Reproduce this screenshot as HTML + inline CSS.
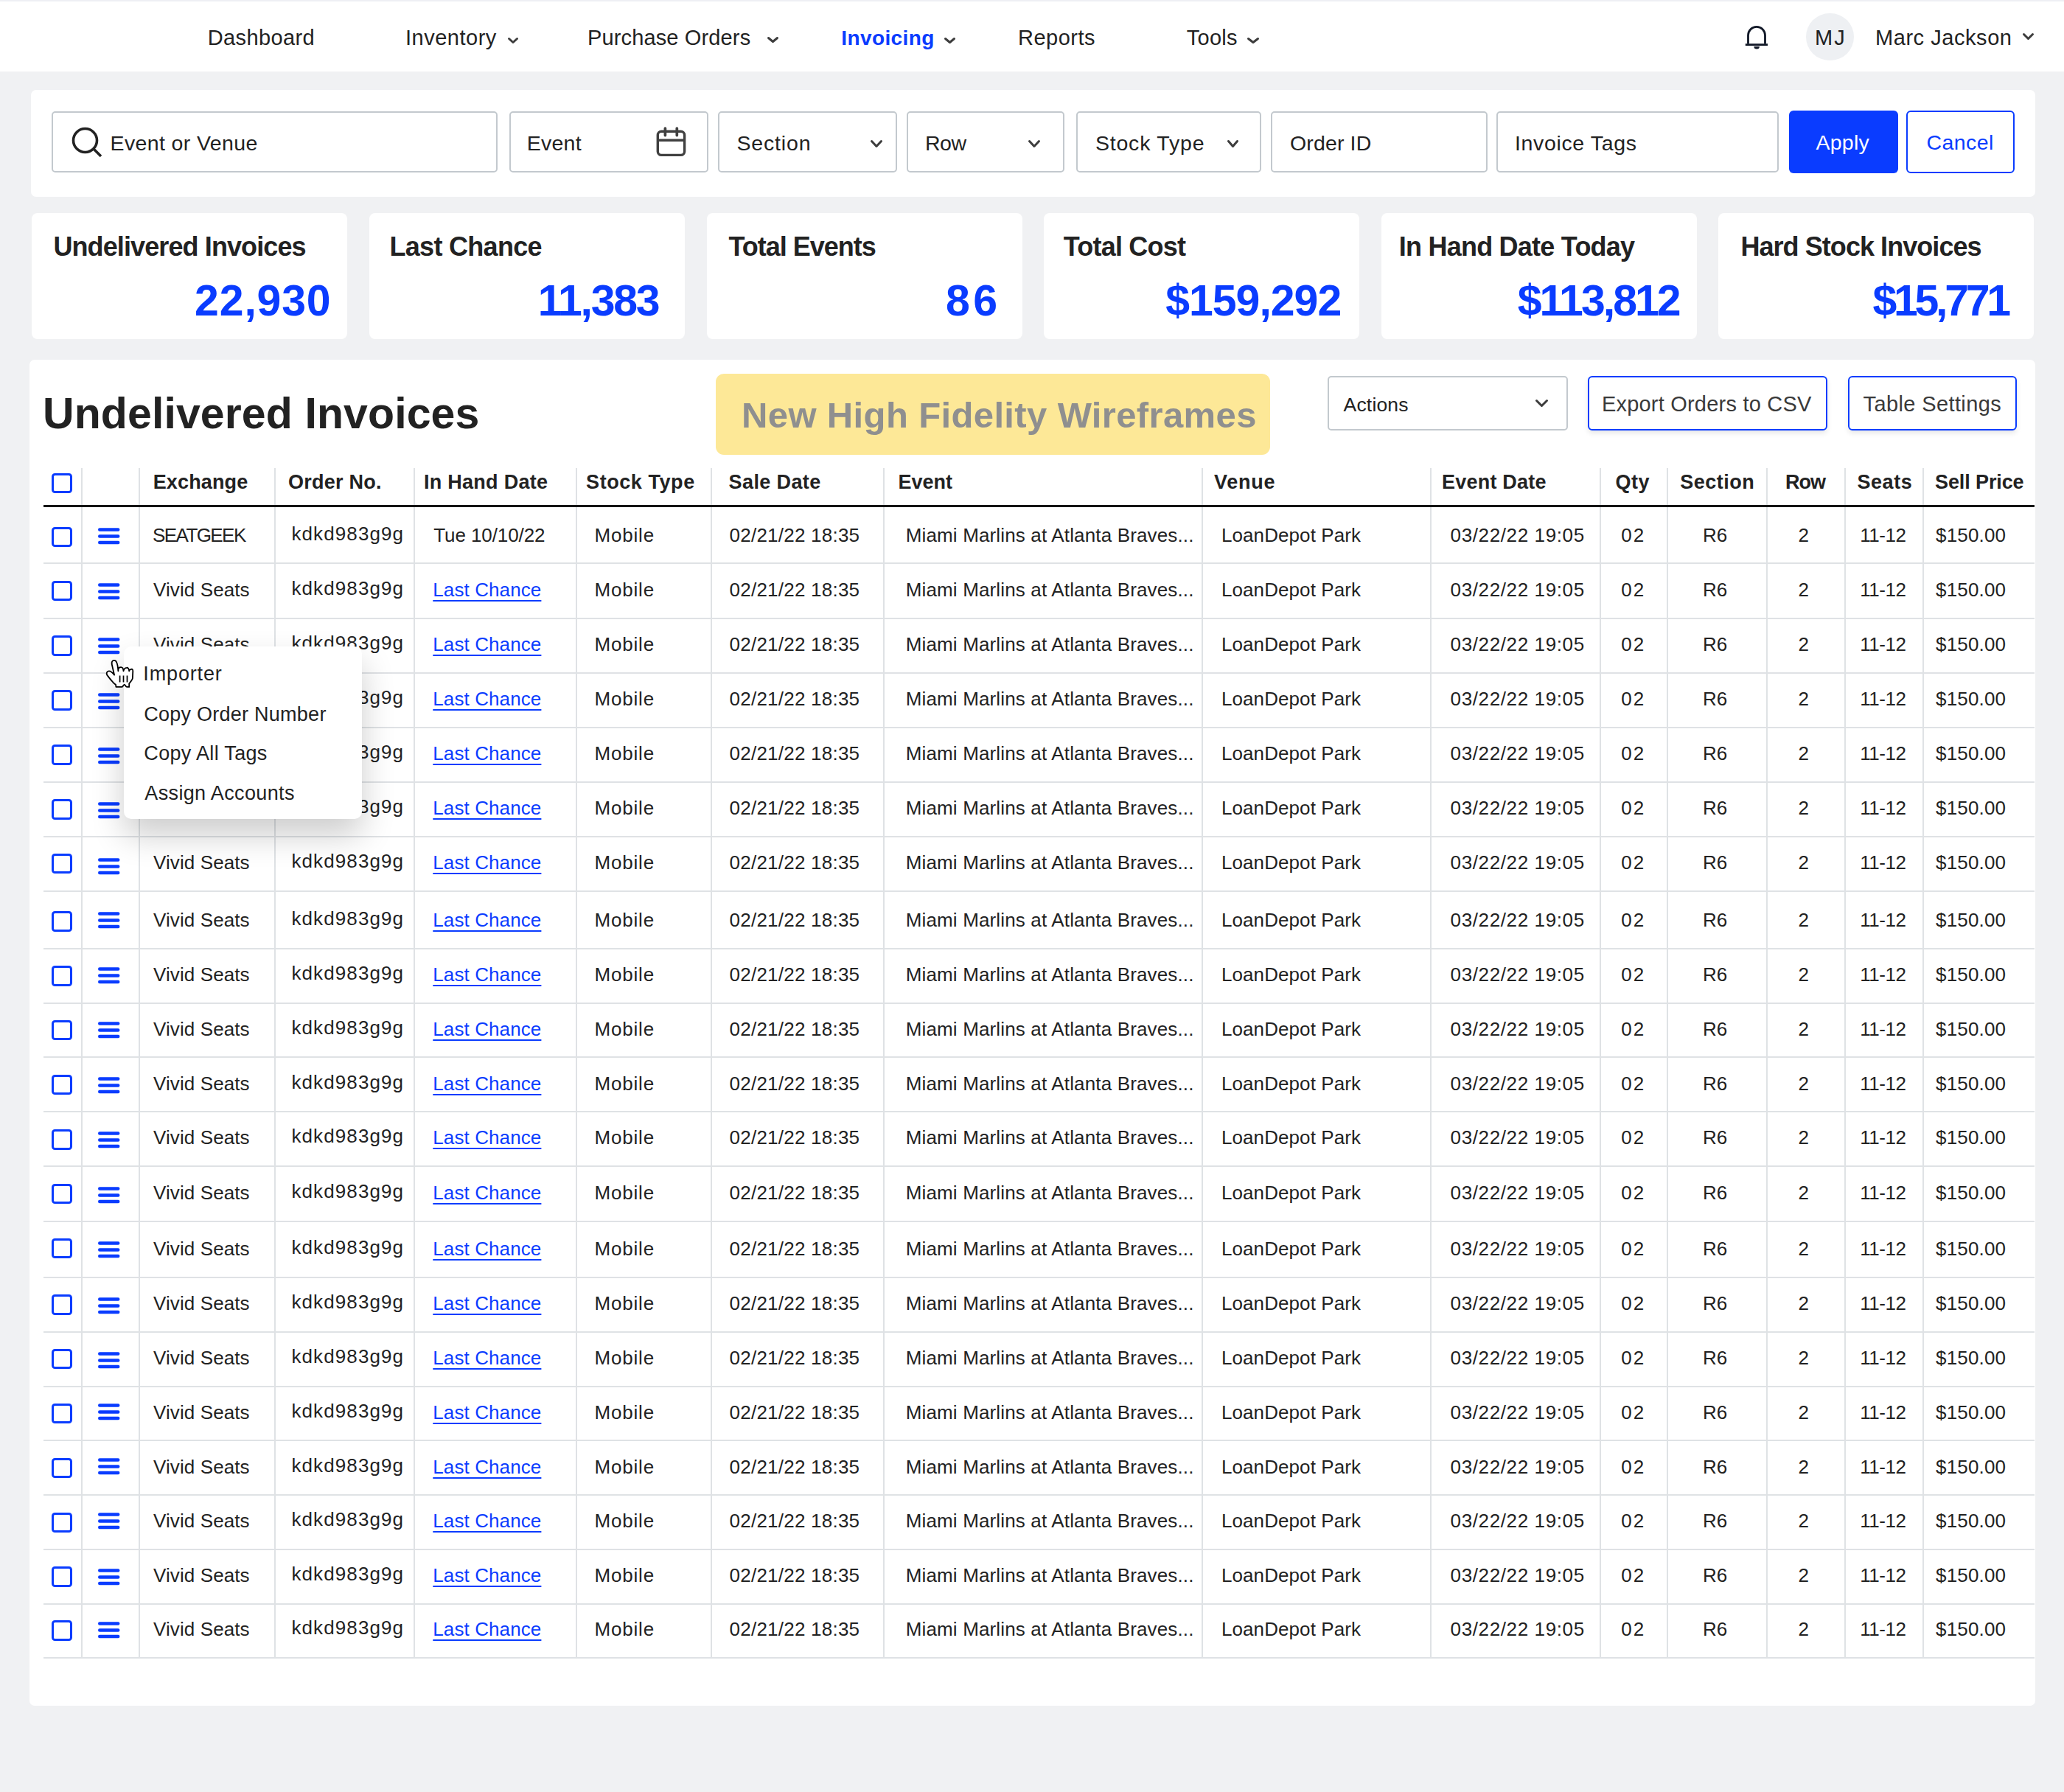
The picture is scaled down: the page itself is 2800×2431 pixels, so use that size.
<!DOCTYPE html>
<html><head><meta charset="utf-8"><style>
html,body{margin:0;padding:0}
body{width:2800px;height:2431px;position:relative;overflow:hidden;background:#f0f1f3;font-family:"Liberation Sans",sans-serif}
.t,.tv{position:absolute;line-height:1;white-space:nowrap}
.r{position:absolute;box-sizing:border-box}
svg.r{overflow:visible}
</style></head><body>
<div class="r" style="left:0.0px;top:0.0px;width:2800.0px;height:2.0px;background:#eeeff4"></div>
<div class="r" style="left:0.0px;top:2.0px;width:2800.0px;height:95.0px;background:#fff"></div>
<div class="t " style="left:281.7px;top:36.7px;font-size:29px;font-weight:400;color:#222;letter-spacing:0.38px;">Dashboard</div>
<div class="t " style="left:550.0px;top:36.7px;font-size:29px;font-weight:400;color:#222;letter-spacing:0.50px;">Inventory</div>
<svg class="r" style="left:686.0px;top:48.0px" width="20.0" height="14.0" viewBox="-3 -3 20.0 14.0"><path d="M1.5 1.5 L7.0 6.5 L12.5 1.5" fill="none" stroke="#3d3d3d" stroke-width="3" stroke-linecap="round" stroke-linejoin="round"/></svg>
<div class="t " style="left:797.0px;top:36.7px;font-size:29px;font-weight:400;color:#222;letter-spacing:0.14px;">Purchase Orders</div>
<svg class="r" style="left:1038.0px;top:47.0px" width="21.0" height="14.0" viewBox="-3 -3 21.0 14.0"><path d="M1.5 1.5 L7.5 6.5 L13.5 1.5" fill="none" stroke="#3d3d3d" stroke-width="3" stroke-linecap="round" stroke-linejoin="round"/></svg>
<div class="t " style="left:1141.3px;top:37.6px;font-size:28px;font-weight:700;color:#0a3cff;letter-spacing:0.38px;">Invoicing</div>
<svg class="r" style="left:1278.0px;top:48.0px" width="21.0" height="14.0" viewBox="-3 -3 21.0 14.0"><path d="M1.5 1.5 L7.5 6.5 L13.5 1.5" fill="none" stroke="#3d3d3d" stroke-width="3" stroke-linecap="round" stroke-linejoin="round"/></svg>
<div class="t " style="left:1381.0px;top:36.7px;font-size:29px;font-weight:400;color:#222;letter-spacing:0.50px;">Reports</div>
<div class="t " style="left:1609.8px;top:36.7px;font-size:29px;font-weight:400;color:#222;letter-spacing:0.25px;">Tools</div>
<svg class="r" style="left:1689.0px;top:48.0px" width="22.0" height="14.0" viewBox="-3 -3 22.0 14.0"><path d="M1.5 1.5 L8.0 6.5 L14.5 1.5" fill="none" stroke="#3d3d3d" stroke-width="3" stroke-linecap="round" stroke-linejoin="round"/></svg>
<svg class="r" style="left:2366px;top:33px" width="34" height="36" viewBox="0 0 34 36"><path d="M5.5 26.5 V14.8 A11.5 11.5 0 0 1 28.5 14.8 V26.5" fill="none" stroke="#111827" stroke-width="2.8"/><path d="M1.8 27.6 H32" stroke="#111827" stroke-width="2.8"/><path d="M13.4 30 A3.75 3.6 0 0 0 20.9 30 Z" fill="#111827"/></svg>
<div class="r" style="left:2450.0px;top:17.5px;width:64.5px;height:64.5px;background:#eef0f3;border-radius:50%"></div>
<div class="t " style="left:2462.0px;top:36.7px;font-size:29px;font-weight:400;color:#222;letter-spacing:2.00px;">MJ</div>
<div class="t " style="left:2544.0px;top:36.7px;font-size:29px;font-weight:400;color:#222;letter-spacing:0.55px;">Marc Jackson</div>
<svg class="r" style="left:2741.0px;top:42.0px" width="21.0" height="15.0" viewBox="-3 -3 21.0 15.0"><path d="M1.5 1.5 L7.5 7.5 L13.5 1.5" fill="none" stroke="#3d3d3d" stroke-width="3" stroke-linecap="round" stroke-linejoin="round"/></svg>
<div class="r" style="left:42.0px;top:122.0px;width:2719.0px;height:145.0px;background:#fff;border-radius:7px"></div>
<div class="r" style="left:70.0px;top:151.0px;width:605.0px;height:83.0px;border:2px solid #c3c9ce;border-radius:5px;background:#fff"></div>
<svg class="r" style="left:95.7px;top:170.8px" width="46" height="46" viewBox="0 0 46 46"><circle cx="19.5" cy="19.5" r="16" fill="none" stroke="#222" stroke-width="3.6"/><path d="M31 31 L41 41" stroke="#222" stroke-width="3.6" stroke-linecap="butt"/></svg>
<div class="t " style="left:149.5px;top:180.1px;font-size:28.5px;font-weight:400;color:#222;letter-spacing:0.38px;">Event or Venue</div>
<div class="r" style="left:691.0px;top:151.0px;width:270.0px;height:83.0px;border:2px solid #c3c9ce;border-radius:5px;background:#fff"></div>
<div class="t " style="left:714.7px;top:180.1px;font-size:28.5px;font-weight:400;color:#222;letter-spacing:0.25px;">Event</div>
<svg class="r" style="left:889px;top:172px" width="44" height="42" viewBox="0 0 44 42"><rect x="3.3" y="6.2" width="36.3" height="32.2" rx="5" fill="none" stroke="#404040" stroke-width="3.4"/><path d="M3.3 18.3 H39.6" stroke="#404040" stroke-width="3.4"/><path d="M13.4 2 V11.6 M29.3 2 V11.6" stroke="#404040" stroke-width="3.7" stroke-linecap="round"/></svg>
<div class="r" style="left:974.0px;top:151.0px;width:243.0px;height:83.0px;border:2px solid #c3c9ce;border-radius:5px;background:#fff"></div>
<div class="t " style="left:999.5px;top:180.1px;font-size:28.5px;font-weight:400;color:#222;letter-spacing:0.83px;">Section</div>
<svg class="r" style="left:1178.0px;top:187.0px" width="22.0" height="16.0" viewBox="-3 -3 22.0 16.0"><path d="M1.5 1.5 L8.0 8.5 L14.5 1.5" fill="none" stroke="#3d3d3d" stroke-width="3" stroke-linecap="round" stroke-linejoin="round"/></svg>
<div class="r" style="left:1230.0px;top:151.0px;width:214.0px;height:83.0px;border:2px solid #c3c9ce;border-radius:5px;background:#fff"></div>
<div class="t " style="left:1255.0px;top:180.1px;font-size:28.5px;font-weight:400;color:#222;letter-spacing:-0.50px;">Row</div>
<svg class="r" style="left:1392.0px;top:187.0px" width="22.0" height="16.0" viewBox="-3 -3 22.0 16.0"><path d="M1.5 1.5 L8.0 8.5 L14.5 1.5" fill="none" stroke="#3d3d3d" stroke-width="3" stroke-linecap="round" stroke-linejoin="round"/></svg>
<div class="r" style="left:1460.0px;top:151.0px;width:251.0px;height:83.0px;border:2px solid #c3c9ce;border-radius:5px;background:#fff"></div>
<div class="t " style="left:1486.0px;top:180.1px;font-size:28.5px;font-weight:400;color:#222;letter-spacing:0.78px;">Stock Type</div>
<svg class="r" style="left:1662.0px;top:187.0px" width="21.0" height="16.0" viewBox="-3 -3 21.0 16.0"><path d="M1.5 1.5 L7.5 8.5 L13.5 1.5" fill="none" stroke="#3d3d3d" stroke-width="3" stroke-linecap="round" stroke-linejoin="round"/></svg>
<div class="r" style="left:1724.0px;top:151.0px;width:294.0px;height:83.0px;border:2px solid #c3c9ce;border-radius:5px;background:#fff"></div>
<div class="t " style="left:1750.0px;top:180.1px;font-size:28.5px;font-weight:400;color:#222;letter-spacing:0.14px;">Order ID</div>
<div class="r" style="left:2030.0px;top:151.0px;width:383.0px;height:83.0px;border:2px solid #c3c9ce;border-radius:5px;background:#fff"></div>
<div class="t " style="left:2055.0px;top:180.1px;font-size:28.5px;font-weight:400;color:#222;letter-spacing:0.64px;">Invoice Tags</div>
<div class="r" style="left:2427.0px;top:150.0px;width:147.5px;height:85.0px;background:#0a3cff;border-radius:6px"></div>
<div class="t " style="left:2463.5px;top:179.4px;font-size:28.5px;font-weight:400;color:#fff;letter-spacing:0.25px;">Apply</div>
<div class="r" style="left:2585.5px;top:150.0px;width:147.5px;height:85.0px;border:2.5px solid #0a3cff;border-radius:6px;background:#fff"></div>
<div class="t " style="left:2613.5px;top:179.4px;font-size:28.5px;font-weight:400;color:#0a3cff;letter-spacing:0.40px;">Cancel</div>
<div class="r" style="left:43.0px;top:289.0px;width:428.0px;height:170.5px;background:#fff;border-radius:8px"></div>
<div class="t " style="left:72.4px;top:317.1px;font-size:36px;font-weight:700;color:#222;letter-spacing:-0.89px;">Undelivered Invoices</div>
<div class="tv" style="right:2350.5px;top:378.7px;font-size:59px;font-weight:700;color:#0a3cff;letter-spacing:0.82px">22,930</div>
<div class="r" style="left:501.0px;top:289.0px;width:428.0px;height:170.5px;background:#fff;border-radius:8px"></div>
<div class="t " style="left:528.5px;top:317.1px;font-size:36px;font-weight:700;color:#222;letter-spacing:-0.70px;">Last Chance</div>
<div class="tv" style="right:1906.8px;top:378.7px;font-size:59px;font-weight:700;color:#0a3cff;letter-spacing:-2.30px">11,383</div>
<div class="r" style="left:959.0px;top:289.0px;width:428.0px;height:170.5px;background:#fff;border-radius:8px"></div>
<div class="t " style="left:988.4px;top:317.1px;font-size:36px;font-weight:700;color:#222;letter-spacing:-1.00px;">Total Events</div>
<div class="tv" style="right:1442.7px;top:378.7px;font-size:59px;font-weight:700;color:#0a3cff;letter-spacing:4.30px">86</div>
<div class="r" style="left:1416.0px;top:289.0px;width:428.0px;height:170.5px;background:#fff;border-radius:8px"></div>
<div class="t " style="left:1442.7px;top:317.1px;font-size:36px;font-weight:700;color:#222;letter-spacing:-0.78px;">Total Cost</div>
<div class="tv" style="right:980.8px;top:378.7px;font-size:59px;font-weight:700;color:#0a3cff;letter-spacing:-1.01px">$159,292</div>
<div class="r" style="left:1874.0px;top:289.0px;width:428.0px;height:170.5px;background:#fff;border-radius:8px"></div>
<div class="t " style="left:1897.7px;top:317.1px;font-size:36px;font-weight:700;color:#222;letter-spacing:-0.76px;">In Hand Date Today</div>
<div class="tv" style="right:522.4px;top:378.7px;font-size:59px;font-weight:700;color:#0a3cff;letter-spacing:-2.99px">$113,812</div>
<div class="r" style="left:2331.0px;top:289.0px;width:428.0px;height:170.5px;background:#fff;border-radius:8px"></div>
<div class="t " style="left:2361.4px;top:317.1px;font-size:36px;font-weight:700;color:#222;letter-spacing:-0.94px;">Hard Stock Invoices</div>
<div class="tv" style="right:76.1px;top:378.7px;font-size:59px;font-weight:700;color:#0a3cff;letter-spacing:-4.25px">$15,771</div>
<div class="r" style="left:40.1px;top:487.5px;width:2720.6px;height:1826.0px;background:#fff;border-radius:7px"></div>
<div class="t " style="left:58.0px;top:532.3px;font-size:59px;font-weight:700;color:#222;letter-spacing:0.11px;">Undelivered Invoices</div>
<div class="r" style="left:970.5px;top:507.0px;width:752.8px;height:110.0px;background:#fde897;border-radius:11px"></div>
<div class="t " style="left:1006.0px;top:538.5px;font-size:49px;font-weight:700;color:#8f8f8f;letter-spacing:0.37px;">New High Fidelity Wireframes</div>
<div class="r" style="left:1801.0px;top:510.0px;width:325.7px;height:73.7px;border:2px solid #c3c9ce;border-radius:5px;background:#fff"></div>
<div class="t " style="left:1822.6px;top:535.6px;font-size:26.5px;font-weight:400;color:#222;letter-spacing:0.17px;">Actions</div>
<svg class="r" style="left:2080.0px;top:539.0px" width="23.0" height="16.0" viewBox="-3 -3 23.0 16.0"><path d="M1.5 1.5 L8.5 8.5 L15.5 1.5" fill="none" stroke="#3d3d3d" stroke-width="3" stroke-linecap="round" stroke-linejoin="round"/></svg>
<div class="r" style="left:2154.0px;top:510.0px;width:325.0px;height:73.8px;border:2.4px solid #0a3cff;border-radius:6px;background:#fff;box-shadow:0 4px 7px rgba(0,0,0,0.09)"></div>
<div class="t " style="left:2172.9px;top:534.4px;font-size:29px;font-weight:400;color:#3a3a3a;letter-spacing:0.21px;">Export Orders to CSV</div>
<div class="r" style="left:2507.0px;top:510.0px;width:229.0px;height:73.8px;border:2.4px solid #0a3cff;border-radius:6px;background:#fff;box-shadow:0 4px 7px rgba(0,0,0,0.09)"></div>
<div class="t " style="left:2527.6px;top:534.4px;font-size:29px;font-weight:400;color:#3a3a3a;letter-spacing:0.38px;">Table Settings</div>
<div class="r" style="left:109.7px;top:634.5px;width:2.0px;height:1614.5px;background:#dfe2e5"></div>
<div class="r" style="left:187.5px;top:634.5px;width:2.0px;height:1614.5px;background:#dfe2e5"></div>
<div class="r" style="left:371.6px;top:634.5px;width:2.0px;height:1614.5px;background:#dfe2e5"></div>
<div class="r" style="left:561.2px;top:634.5px;width:2.0px;height:1614.5px;background:#dfe2e5"></div>
<div class="r" style="left:781.2px;top:634.5px;width:2.0px;height:1614.5px;background:#dfe2e5"></div>
<div class="r" style="left:963.7px;top:634.5px;width:2.0px;height:1614.5px;background:#dfe2e5"></div>
<div class="r" style="left:1197.8px;top:634.5px;width:2.0px;height:1614.5px;background:#dfe2e5"></div>
<div class="r" style="left:1629.6px;top:634.5px;width:2.0px;height:1614.5px;background:#dfe2e5"></div>
<div class="r" style="left:1939.7px;top:634.5px;width:2.0px;height:1614.5px;background:#dfe2e5"></div>
<div class="r" style="left:2169.8px;top:634.5px;width:2.0px;height:1614.5px;background:#dfe2e5"></div>
<div class="r" style="left:2261.3px;top:634.5px;width:2.0px;height:1614.5px;background:#dfe2e5"></div>
<div class="r" style="left:2395.6px;top:634.5px;width:2.0px;height:1614.5px;background:#dfe2e5"></div>
<div class="r" style="left:2501.5px;top:634.5px;width:2.0px;height:1614.5px;background:#dfe2e5"></div>
<div class="r" style="left:2607.8px;top:634.5px;width:2.0px;height:1614.5px;background:#dfe2e5"></div>
<div class="r" style="left:59.0px;top:763.4px;width:2701.0px;height:2.0px;background:#dfe2e5"></div>
<div class="r" style="left:59.0px;top:837.8px;width:2701.0px;height:2.0px;background:#dfe2e5"></div>
<div class="r" style="left:59.0px;top:911.8px;width:2701.0px;height:2.0px;background:#dfe2e5"></div>
<div class="r" style="left:59.0px;top:985.9px;width:2701.0px;height:2.0px;background:#dfe2e5"></div>
<div class="r" style="left:59.0px;top:1059.6px;width:2701.0px;height:2.0px;background:#dfe2e5"></div>
<div class="r" style="left:59.0px;top:1133.7px;width:2701.0px;height:2.0px;background:#dfe2e5"></div>
<div class="r" style="left:59.0px;top:1207.8px;width:2701.0px;height:2.0px;background:#dfe2e5"></div>
<div class="r" style="left:59.0px;top:1285.9px;width:2701.0px;height:2.0px;background:#dfe2e5"></div>
<div class="r" style="left:59.0px;top:1359.9px;width:2701.0px;height:2.0px;background:#dfe2e5"></div>
<div class="r" style="left:59.0px;top:1433.4px;width:2701.0px;height:2.0px;background:#dfe2e5"></div>
<div class="r" style="left:59.0px;top:1507.4px;width:2701.0px;height:2.0px;background:#dfe2e5"></div>
<div class="r" style="left:59.0px;top:1581.2px;width:2701.0px;height:2.0px;background:#dfe2e5"></div>
<div class="r" style="left:59.0px;top:1655.5px;width:2701.0px;height:2.0px;background:#dfe2e5"></div>
<div class="r" style="left:59.0px;top:1732.0px;width:2701.0px;height:2.0px;background:#dfe2e5"></div>
<div class="r" style="left:59.0px;top:1805.9px;width:2701.0px;height:2.0px;background:#dfe2e5"></div>
<div class="r" style="left:59.0px;top:1879.9px;width:2701.0px;height:2.0px;background:#dfe2e5"></div>
<div class="r" style="left:59.0px;top:1953.4px;width:2701.0px;height:2.0px;background:#dfe2e5"></div>
<div class="r" style="left:59.0px;top:2027.4px;width:2701.0px;height:2.0px;background:#dfe2e5"></div>
<div class="r" style="left:59.0px;top:2101.2px;width:2701.0px;height:2.0px;background:#dfe2e5"></div>
<div class="r" style="left:59.0px;top:2174.6px;width:2701.0px;height:2.0px;background:#dfe2e5"></div>
<div class="r" style="left:59.0px;top:2248.0px;width:2701.0px;height:2.0px;background:#dfe2e5"></div>
<div class="r" style="left:59.0px;top:684.6px;width:2701.0px;height:3.2px;background:#151515"></div>
<div class="r" style="left:70.4px;top:641.7px;width:28.0px;height:27.6px;border:3px solid #0a3cff;border-radius:4.5px"></div>
<div class="t " style="left:207.7px;top:640.8px;font-size:27px;font-weight:700;color:#222;letter-spacing:0.14px;">Exchange</div>
<div class="t " style="left:391.1px;top:640.8px;font-size:27px;font-weight:700;color:#222;letter-spacing:0.25px;">Order No.</div>
<div class="t " style="left:575.0px;top:640.8px;font-size:27px;font-weight:700;color:#222;letter-spacing:0.27px;">In Hand Date</div>
<div class="t " style="left:795.1px;top:640.8px;font-size:27px;font-weight:700;color:#222;letter-spacing:0.56px;">Stock Type</div>
<div class="t " style="left:988.6px;top:640.8px;font-size:27px;font-weight:700;color:#222;letter-spacing:0.38px;">Sale Date</div>
<div class="t " style="left:1218.4px;top:640.8px;font-size:27px;font-weight:700;color:#222;">Event</div>
<div class="t " style="left:1647.0px;top:640.8px;font-size:27px;font-weight:700;color:#222;letter-spacing:0.75px;">Venue</div>
<div class="t " style="left:1956.0px;top:640.8px;font-size:27px;font-weight:700;color:#222;letter-spacing:0.22px;">Event Date</div>
<div class="t " style="left:2191.6px;top:640.8px;font-size:27px;font-weight:700;color:#222;letter-spacing:0.50px;">Qty</div>
<div class="t " style="left:2279.3px;top:640.8px;font-size:27px;font-weight:700;color:#222;letter-spacing:0.50px;">Section</div>
<div class="t " style="left:2422.0px;top:640.8px;font-size:27px;font-weight:700;color:#222;letter-spacing:-1.00px;">Row</div>
<div class="t " style="left:2519.6px;top:640.8px;font-size:27px;font-weight:700;color:#222;letter-spacing:0.50px;">Seats</div>
<div class="t " style="left:2625.0px;top:640.8px;font-size:27px;font-weight:700;color:#222;letter-spacing:-0.11px;">Sell Price</div>
<div class="r" style="left:70.4px;top:714.5px;width:28.0px;height:27.6px;border:3px solid #0a3cff;border-radius:4.5px"></div>
<svg class="r" style="left:133.3px;top:714.5px" width="31" height="24" viewBox="0 0 31 24"><path d="M2.25 3.5 H27.2 M2.25 12.5 H27.2 M2.25 21 H27.2" stroke="#0a3cff" stroke-width="4.5" stroke-linecap="round"/></svg>
<div class="t " style="left:207.0px;top:712.6px;font-size:26px;font-weight:400;color:#222;letter-spacing:-1.57px;">SEATGEEK</div>
<div class="t " style="left:395.4px;top:710.6px;font-size:26px;font-weight:400;color:#222;letter-spacing:1.11px;">kdkd983g9g</div>
<div class="t " style="left:588.3px;top:712.6px;font-size:26px;font-weight:400;color:#222;letter-spacing:-0.09px;">Tue 10/10/22</div>
<div class="t " style="left:806.5px;top:712.6px;font-size:26px;font-weight:400;color:#222;letter-spacing:0.80px;">Mobile</div>
<div class="t " style="left:989.6px;top:712.6px;font-size:26px;font-weight:400;color:#222;letter-spacing:0.23px;">02/21/22 18:35</div>
<div class="t " style="left:1228.7px;top:712.6px;font-size:26px;font-weight:400;color:#222;letter-spacing:0.15px;">Miami Marlins at Atlanta Braves...</div>
<div class="t " style="left:1657.0px;top:712.6px;font-size:26px;font-weight:400;color:#222;letter-spacing:0.08px;">LoanDepot Park</div>
<div class="t " style="left:1967.6px;top:712.6px;font-size:26px;font-weight:400;color:#222;letter-spacing:0.62px;">03/22/22 19:05</div>
<div class="t " style="left:2199.3px;top:712.6px;font-size:26px;font-weight:400;color:#222;letter-spacing:2.00px;">02</div>
<div class="t " style="left:2310.0px;top:712.6px;font-size:26px;font-weight:400;color:#222;">R6</div>
<div class="t " style="left:2439.6px;top:712.6px;font-size:26px;font-weight:400;color:#222;">2</div>
<div class="t " style="left:2523.3px;top:712.6px;font-size:26px;font-weight:400;color:#222;letter-spacing:-0.50px;">11-12</div>
<div class="t " style="left:2626.0px;top:712.6px;font-size:26px;font-weight:400;color:#222;letter-spacing:0.17px;">$150.00</div>
<div class="r" style="left:70.4px;top:787.9px;width:28.0px;height:27.6px;border:3px solid #0a3cff;border-radius:4.5px"></div>
<svg class="r" style="left:133.3px;top:789.5px" width="31" height="24" viewBox="0 0 31 24"><path d="M2.25 3.5 H27.2 M2.25 12.5 H27.2 M2.25 21 H27.2" stroke="#0a3cff" stroke-width="4.5" stroke-linecap="round"/></svg>
<div class="t " style="left:208.0px;top:787.0px;font-size:26px;font-weight:400;color:#222;letter-spacing:0.10px;">Vivid Seats</div>
<div class="t " style="left:395.4px;top:785.0px;font-size:26px;font-weight:400;color:#222;letter-spacing:1.11px;">kdkd983g9g</div>
<div class="t " style="left:587.3px;top:787.0px;font-size:26px;font-weight:400;color:#0a3cff;letter-spacing:0.10px;text-decoration:underline;text-decoration-thickness:2px;text-underline-offset:5px">Last Chance</div>
<div class="t " style="left:806.5px;top:787.0px;font-size:26px;font-weight:400;color:#222;letter-spacing:0.80px;">Mobile</div>
<div class="t " style="left:989.6px;top:787.0px;font-size:26px;font-weight:400;color:#222;letter-spacing:0.23px;">02/21/22 18:35</div>
<div class="t " style="left:1228.7px;top:787.0px;font-size:26px;font-weight:400;color:#222;letter-spacing:0.15px;">Miami Marlins at Atlanta Braves...</div>
<div class="t " style="left:1657.0px;top:787.0px;font-size:26px;font-weight:400;color:#222;letter-spacing:0.08px;">LoanDepot Park</div>
<div class="t " style="left:1967.6px;top:787.0px;font-size:26px;font-weight:400;color:#222;letter-spacing:0.62px;">03/22/22 19:05</div>
<div class="t " style="left:2199.3px;top:787.0px;font-size:26px;font-weight:400;color:#222;letter-spacing:2.00px;">02</div>
<div class="t " style="left:2310.0px;top:787.0px;font-size:26px;font-weight:400;color:#222;">R6</div>
<div class="t " style="left:2439.6px;top:787.0px;font-size:26px;font-weight:400;color:#222;">2</div>
<div class="t " style="left:2523.3px;top:787.0px;font-size:26px;font-weight:400;color:#222;letter-spacing:-0.50px;">11-12</div>
<div class="t " style="left:2626.0px;top:787.0px;font-size:26px;font-weight:400;color:#222;letter-spacing:0.17px;">$150.00</div>
<div class="r" style="left:70.4px;top:862.2px;width:28.0px;height:27.6px;border:3px solid #0a3cff;border-radius:4.5px"></div>
<svg class="r" style="left:133.3px;top:864.1px" width="31" height="24" viewBox="0 0 31 24"><path d="M2.25 3.5 H27.2 M2.25 12.5 H27.2 M2.25 21 H27.2" stroke="#0a3cff" stroke-width="4.5" stroke-linecap="round"/></svg>
<div class="t " style="left:208.0px;top:861.0px;font-size:26px;font-weight:400;color:#222;letter-spacing:0.10px;">Vivid Seats</div>
<div class="t " style="left:395.4px;top:859.0px;font-size:26px;font-weight:400;color:#222;letter-spacing:1.11px;">kdkd983g9g</div>
<div class="t " style="left:587.3px;top:861.0px;font-size:26px;font-weight:400;color:#0a3cff;letter-spacing:0.10px;text-decoration:underline;text-decoration-thickness:2px;text-underline-offset:5px">Last Chance</div>
<div class="t " style="left:806.5px;top:861.0px;font-size:26px;font-weight:400;color:#222;letter-spacing:0.80px;">Mobile</div>
<div class="t " style="left:989.6px;top:861.0px;font-size:26px;font-weight:400;color:#222;letter-spacing:0.23px;">02/21/22 18:35</div>
<div class="t " style="left:1228.7px;top:861.0px;font-size:26px;font-weight:400;color:#222;letter-spacing:0.15px;">Miami Marlins at Atlanta Braves...</div>
<div class="t " style="left:1657.0px;top:861.0px;font-size:26px;font-weight:400;color:#222;letter-spacing:0.08px;">LoanDepot Park</div>
<div class="t " style="left:1967.6px;top:861.0px;font-size:26px;font-weight:400;color:#222;letter-spacing:0.62px;">03/22/22 19:05</div>
<div class="t " style="left:2199.3px;top:861.0px;font-size:26px;font-weight:400;color:#222;letter-spacing:2.00px;">02</div>
<div class="t " style="left:2310.0px;top:861.0px;font-size:26px;font-weight:400;color:#222;">R6</div>
<div class="t " style="left:2439.6px;top:861.0px;font-size:26px;font-weight:400;color:#222;">2</div>
<div class="t " style="left:2523.3px;top:861.0px;font-size:26px;font-weight:400;color:#222;letter-spacing:-0.50px;">11-12</div>
<div class="t " style="left:2626.0px;top:861.0px;font-size:26px;font-weight:400;color:#222;letter-spacing:0.17px;">$150.00</div>
<div class="r" style="left:70.4px;top:936.3px;width:28.0px;height:27.6px;border:3px solid #0a3cff;border-radius:4.5px"></div>
<svg class="r" style="left:133.3px;top:939.0px" width="31" height="24" viewBox="0 0 31 24"><path d="M2.25 3.5 H27.2 M2.25 12.5 H27.2 M2.25 21 H27.2" stroke="#0a3cff" stroke-width="4.5" stroke-linecap="round"/></svg>
<div class="t " style="left:208.0px;top:935.1px;font-size:26px;font-weight:400;color:#222;letter-spacing:0.10px;">Vivid Seats</div>
<div class="t " style="left:395.4px;top:933.1px;font-size:26px;font-weight:400;color:#222;letter-spacing:1.11px;">kdkd983g9g</div>
<div class="t " style="left:587.3px;top:935.1px;font-size:26px;font-weight:400;color:#0a3cff;letter-spacing:0.10px;text-decoration:underline;text-decoration-thickness:2px;text-underline-offset:5px">Last Chance</div>
<div class="t " style="left:806.5px;top:935.1px;font-size:26px;font-weight:400;color:#222;letter-spacing:0.80px;">Mobile</div>
<div class="t " style="left:989.6px;top:935.1px;font-size:26px;font-weight:400;color:#222;letter-spacing:0.23px;">02/21/22 18:35</div>
<div class="t " style="left:1228.7px;top:935.1px;font-size:26px;font-weight:400;color:#222;letter-spacing:0.15px;">Miami Marlins at Atlanta Braves...</div>
<div class="t " style="left:1657.0px;top:935.1px;font-size:26px;font-weight:400;color:#222;letter-spacing:0.08px;">LoanDepot Park</div>
<div class="t " style="left:1967.6px;top:935.1px;font-size:26px;font-weight:400;color:#222;letter-spacing:0.62px;">03/22/22 19:05</div>
<div class="t " style="left:2199.3px;top:935.1px;font-size:26px;font-weight:400;color:#222;letter-spacing:2.00px;">02</div>
<div class="t " style="left:2310.0px;top:935.1px;font-size:26px;font-weight:400;color:#222;">R6</div>
<div class="t " style="left:2439.6px;top:935.1px;font-size:26px;font-weight:400;color:#222;">2</div>
<div class="t " style="left:2523.3px;top:935.1px;font-size:26px;font-weight:400;color:#222;letter-spacing:-0.50px;">11-12</div>
<div class="t " style="left:2626.0px;top:935.1px;font-size:26px;font-weight:400;color:#222;letter-spacing:0.17px;">$150.00</div>
<div class="r" style="left:70.4px;top:1010.4px;width:28.0px;height:27.6px;border:3px solid #0a3cff;border-radius:4.5px"></div>
<svg class="r" style="left:133.3px;top:1012.7px" width="31" height="24" viewBox="0 0 31 24"><path d="M2.25 3.5 H27.2 M2.25 12.5 H27.2 M2.25 21 H27.2" stroke="#0a3cff" stroke-width="4.5" stroke-linecap="round"/></svg>
<div class="t " style="left:208.0px;top:1008.8px;font-size:26px;font-weight:400;color:#222;letter-spacing:0.10px;">Vivid Seats</div>
<div class="t " style="left:395.4px;top:1006.8px;font-size:26px;font-weight:400;color:#222;letter-spacing:1.11px;">kdkd983g9g</div>
<div class="t " style="left:587.3px;top:1008.8px;font-size:26px;font-weight:400;color:#0a3cff;letter-spacing:0.10px;text-decoration:underline;text-decoration-thickness:2px;text-underline-offset:5px">Last Chance</div>
<div class="t " style="left:806.5px;top:1008.8px;font-size:26px;font-weight:400;color:#222;letter-spacing:0.80px;">Mobile</div>
<div class="t " style="left:989.6px;top:1008.8px;font-size:26px;font-weight:400;color:#222;letter-spacing:0.23px;">02/21/22 18:35</div>
<div class="t " style="left:1228.7px;top:1008.8px;font-size:26px;font-weight:400;color:#222;letter-spacing:0.15px;">Miami Marlins at Atlanta Braves...</div>
<div class="t " style="left:1657.0px;top:1008.8px;font-size:26px;font-weight:400;color:#222;letter-spacing:0.08px;">LoanDepot Park</div>
<div class="t " style="left:1967.6px;top:1008.8px;font-size:26px;font-weight:400;color:#222;letter-spacing:0.62px;">03/22/22 19:05</div>
<div class="t " style="left:2199.3px;top:1008.8px;font-size:26px;font-weight:400;color:#222;letter-spacing:2.00px;">02</div>
<div class="t " style="left:2310.0px;top:1008.8px;font-size:26px;font-weight:400;color:#222;">R6</div>
<div class="t " style="left:2439.6px;top:1008.8px;font-size:26px;font-weight:400;color:#222;">2</div>
<div class="t " style="left:2523.3px;top:1008.8px;font-size:26px;font-weight:400;color:#222;letter-spacing:-0.50px;">11-12</div>
<div class="t " style="left:2626.0px;top:1008.8px;font-size:26px;font-weight:400;color:#222;letter-spacing:0.17px;">$150.00</div>
<div class="r" style="left:70.4px;top:1084.2px;width:28.0px;height:27.6px;border:3px solid #0a3cff;border-radius:4.5px"></div>
<svg class="r" style="left:133.3px;top:1087.2px" width="31" height="24" viewBox="0 0 31 24"><path d="M2.25 3.5 H27.2 M2.25 12.5 H27.2 M2.25 21 H27.2" stroke="#0a3cff" stroke-width="4.5" stroke-linecap="round"/></svg>
<div class="t " style="left:208.0px;top:1082.9px;font-size:26px;font-weight:400;color:#222;letter-spacing:0.10px;">Vivid Seats</div>
<div class="t " style="left:395.4px;top:1080.9px;font-size:26px;font-weight:400;color:#222;letter-spacing:1.11px;">kdkd983g9g</div>
<div class="t " style="left:587.3px;top:1082.9px;font-size:26px;font-weight:400;color:#0a3cff;letter-spacing:0.10px;text-decoration:underline;text-decoration-thickness:2px;text-underline-offset:5px">Last Chance</div>
<div class="t " style="left:806.5px;top:1082.9px;font-size:26px;font-weight:400;color:#222;letter-spacing:0.80px;">Mobile</div>
<div class="t " style="left:989.6px;top:1082.9px;font-size:26px;font-weight:400;color:#222;letter-spacing:0.23px;">02/21/22 18:35</div>
<div class="t " style="left:1228.7px;top:1082.9px;font-size:26px;font-weight:400;color:#222;letter-spacing:0.15px;">Miami Marlins at Atlanta Braves...</div>
<div class="t " style="left:1657.0px;top:1082.9px;font-size:26px;font-weight:400;color:#222;letter-spacing:0.08px;">LoanDepot Park</div>
<div class="t " style="left:1967.6px;top:1082.9px;font-size:26px;font-weight:400;color:#222;letter-spacing:0.62px;">03/22/22 19:05</div>
<div class="t " style="left:2199.3px;top:1082.9px;font-size:26px;font-weight:400;color:#222;letter-spacing:2.00px;">02</div>
<div class="t " style="left:2310.0px;top:1082.9px;font-size:26px;font-weight:400;color:#222;">R6</div>
<div class="t " style="left:2439.6px;top:1082.9px;font-size:26px;font-weight:400;color:#222;">2</div>
<div class="t " style="left:2523.3px;top:1082.9px;font-size:26px;font-weight:400;color:#222;letter-spacing:-0.50px;">11-12</div>
<div class="t " style="left:2626.0px;top:1082.9px;font-size:26px;font-weight:400;color:#222;letter-spacing:0.17px;">$150.00</div>
<div class="r" style="left:70.4px;top:1157.5px;width:28.0px;height:27.6px;border:3px solid #0a3cff;border-radius:4.5px"></div>
<svg class="r" style="left:133.3px;top:1162.8px" width="31" height="24" viewBox="0 0 31 24"><path d="M2.25 3.5 H27.2 M2.25 12.5 H27.2 M2.25 21 H27.2" stroke="#0a3cff" stroke-width="4.5" stroke-linecap="round"/></svg>
<div class="t " style="left:208.0px;top:1157.0px;font-size:26px;font-weight:400;color:#222;letter-spacing:0.10px;">Vivid Seats</div>
<div class="t " style="left:395.4px;top:1155.0px;font-size:26px;font-weight:400;color:#222;letter-spacing:1.11px;">kdkd983g9g</div>
<div class="t " style="left:587.3px;top:1157.0px;font-size:26px;font-weight:400;color:#0a3cff;letter-spacing:0.10px;text-decoration:underline;text-decoration-thickness:2px;text-underline-offset:5px">Last Chance</div>
<div class="t " style="left:806.5px;top:1157.0px;font-size:26px;font-weight:400;color:#222;letter-spacing:0.80px;">Mobile</div>
<div class="t " style="left:989.6px;top:1157.0px;font-size:26px;font-weight:400;color:#222;letter-spacing:0.23px;">02/21/22 18:35</div>
<div class="t " style="left:1228.7px;top:1157.0px;font-size:26px;font-weight:400;color:#222;letter-spacing:0.15px;">Miami Marlins at Atlanta Braves...</div>
<div class="t " style="left:1657.0px;top:1157.0px;font-size:26px;font-weight:400;color:#222;letter-spacing:0.08px;">LoanDepot Park</div>
<div class="t " style="left:1967.6px;top:1157.0px;font-size:26px;font-weight:400;color:#222;letter-spacing:0.62px;">03/22/22 19:05</div>
<div class="t " style="left:2199.3px;top:1157.0px;font-size:26px;font-weight:400;color:#222;letter-spacing:2.00px;">02</div>
<div class="t " style="left:2310.0px;top:1157.0px;font-size:26px;font-weight:400;color:#222;">R6</div>
<div class="t " style="left:2439.6px;top:1157.0px;font-size:26px;font-weight:400;color:#222;">2</div>
<div class="t " style="left:2523.3px;top:1157.0px;font-size:26px;font-weight:400;color:#222;letter-spacing:-0.50px;">11-12</div>
<div class="t " style="left:2626.0px;top:1157.0px;font-size:26px;font-weight:400;color:#222;letter-spacing:0.17px;">$150.00</div>
<div class="r" style="left:70.4px;top:1236.0px;width:28.0px;height:27.6px;border:3px solid #0a3cff;border-radius:4.5px"></div>
<svg class="r" style="left:133.3px;top:1236.3px" width="31" height="24" viewBox="0 0 31 24"><path d="M2.25 3.5 H27.2 M2.25 12.5 H27.2 M2.25 21 H27.2" stroke="#0a3cff" stroke-width="4.5" stroke-linecap="round"/></svg>
<div class="t " style="left:208.0px;top:1235.1px;font-size:26px;font-weight:400;color:#222;letter-spacing:0.10px;">Vivid Seats</div>
<div class="t " style="left:395.4px;top:1233.1px;font-size:26px;font-weight:400;color:#222;letter-spacing:1.11px;">kdkd983g9g</div>
<div class="t " style="left:587.3px;top:1235.1px;font-size:26px;font-weight:400;color:#0a3cff;letter-spacing:0.10px;text-decoration:underline;text-decoration-thickness:2px;text-underline-offset:5px">Last Chance</div>
<div class="t " style="left:806.5px;top:1235.1px;font-size:26px;font-weight:400;color:#222;letter-spacing:0.80px;">Mobile</div>
<div class="t " style="left:989.6px;top:1235.1px;font-size:26px;font-weight:400;color:#222;letter-spacing:0.23px;">02/21/22 18:35</div>
<div class="t " style="left:1228.7px;top:1235.1px;font-size:26px;font-weight:400;color:#222;letter-spacing:0.15px;">Miami Marlins at Atlanta Braves...</div>
<div class="t " style="left:1657.0px;top:1235.1px;font-size:26px;font-weight:400;color:#222;letter-spacing:0.08px;">LoanDepot Park</div>
<div class="t " style="left:1967.6px;top:1235.1px;font-size:26px;font-weight:400;color:#222;letter-spacing:0.62px;">03/22/22 19:05</div>
<div class="t " style="left:2199.3px;top:1235.1px;font-size:26px;font-weight:400;color:#222;letter-spacing:2.00px;">02</div>
<div class="t " style="left:2310.0px;top:1235.1px;font-size:26px;font-weight:400;color:#222;">R6</div>
<div class="t " style="left:2439.6px;top:1235.1px;font-size:26px;font-weight:400;color:#222;">2</div>
<div class="t " style="left:2523.3px;top:1235.1px;font-size:26px;font-weight:400;color:#222;letter-spacing:-0.50px;">11-12</div>
<div class="t " style="left:2626.0px;top:1235.1px;font-size:26px;font-weight:400;color:#222;letter-spacing:0.17px;">$150.00</div>
<div class="r" style="left:70.4px;top:1310.0px;width:28.0px;height:27.6px;border:3px solid #0a3cff;border-radius:4.5px"></div>
<svg class="r" style="left:133.3px;top:1310.5px" width="31" height="24" viewBox="0 0 31 24"><path d="M2.25 3.5 H27.2 M2.25 12.5 H27.2 M2.25 21 H27.2" stroke="#0a3cff" stroke-width="4.5" stroke-linecap="round"/></svg>
<div class="t " style="left:208.0px;top:1309.1px;font-size:26px;font-weight:400;color:#222;letter-spacing:0.10px;">Vivid Seats</div>
<div class="t " style="left:395.4px;top:1307.1px;font-size:26px;font-weight:400;color:#222;letter-spacing:1.11px;">kdkd983g9g</div>
<div class="t " style="left:587.3px;top:1309.1px;font-size:26px;font-weight:400;color:#0a3cff;letter-spacing:0.10px;text-decoration:underline;text-decoration-thickness:2px;text-underline-offset:5px">Last Chance</div>
<div class="t " style="left:806.5px;top:1309.1px;font-size:26px;font-weight:400;color:#222;letter-spacing:0.80px;">Mobile</div>
<div class="t " style="left:989.6px;top:1309.1px;font-size:26px;font-weight:400;color:#222;letter-spacing:0.23px;">02/21/22 18:35</div>
<div class="t " style="left:1228.7px;top:1309.1px;font-size:26px;font-weight:400;color:#222;letter-spacing:0.15px;">Miami Marlins at Atlanta Braves...</div>
<div class="t " style="left:1657.0px;top:1309.1px;font-size:26px;font-weight:400;color:#222;letter-spacing:0.08px;">LoanDepot Park</div>
<div class="t " style="left:1967.6px;top:1309.1px;font-size:26px;font-weight:400;color:#222;letter-spacing:0.62px;">03/22/22 19:05</div>
<div class="t " style="left:2199.3px;top:1309.1px;font-size:26px;font-weight:400;color:#222;letter-spacing:2.00px;">02</div>
<div class="t " style="left:2310.0px;top:1309.1px;font-size:26px;font-weight:400;color:#222;">R6</div>
<div class="t " style="left:2439.6px;top:1309.1px;font-size:26px;font-weight:400;color:#222;">2</div>
<div class="t " style="left:2523.3px;top:1309.1px;font-size:26px;font-weight:400;color:#222;letter-spacing:-0.50px;">11-12</div>
<div class="t " style="left:2626.0px;top:1309.1px;font-size:26px;font-weight:400;color:#222;letter-spacing:0.17px;">$150.00</div>
<div class="r" style="left:70.4px;top:1383.8px;width:28.0px;height:27.6px;border:3px solid #0a3cff;border-radius:4.5px"></div>
<svg class="r" style="left:133.3px;top:1384.9px" width="31" height="24" viewBox="0 0 31 24"><path d="M2.25 3.5 H27.2 M2.25 12.5 H27.2 M2.25 21 H27.2" stroke="#0a3cff" stroke-width="4.5" stroke-linecap="round"/></svg>
<div class="t " style="left:208.0px;top:1382.6px;font-size:26px;font-weight:400;color:#222;letter-spacing:0.10px;">Vivid Seats</div>
<div class="t " style="left:395.4px;top:1380.6px;font-size:26px;font-weight:400;color:#222;letter-spacing:1.11px;">kdkd983g9g</div>
<div class="t " style="left:587.3px;top:1382.6px;font-size:26px;font-weight:400;color:#0a3cff;letter-spacing:0.10px;text-decoration:underline;text-decoration-thickness:2px;text-underline-offset:5px">Last Chance</div>
<div class="t " style="left:806.5px;top:1382.6px;font-size:26px;font-weight:400;color:#222;letter-spacing:0.80px;">Mobile</div>
<div class="t " style="left:989.6px;top:1382.6px;font-size:26px;font-weight:400;color:#222;letter-spacing:0.23px;">02/21/22 18:35</div>
<div class="t " style="left:1228.7px;top:1382.6px;font-size:26px;font-weight:400;color:#222;letter-spacing:0.15px;">Miami Marlins at Atlanta Braves...</div>
<div class="t " style="left:1657.0px;top:1382.6px;font-size:26px;font-weight:400;color:#222;letter-spacing:0.08px;">LoanDepot Park</div>
<div class="t " style="left:1967.6px;top:1382.6px;font-size:26px;font-weight:400;color:#222;letter-spacing:0.62px;">03/22/22 19:05</div>
<div class="t " style="left:2199.3px;top:1382.6px;font-size:26px;font-weight:400;color:#222;letter-spacing:2.00px;">02</div>
<div class="t " style="left:2310.0px;top:1382.6px;font-size:26px;font-weight:400;color:#222;">R6</div>
<div class="t " style="left:2439.6px;top:1382.6px;font-size:26px;font-weight:400;color:#222;">2</div>
<div class="t " style="left:2523.3px;top:1382.6px;font-size:26px;font-weight:400;color:#222;letter-spacing:-0.50px;">11-12</div>
<div class="t " style="left:2626.0px;top:1382.6px;font-size:26px;font-weight:400;color:#222;letter-spacing:0.17px;">$150.00</div>
<div class="r" style="left:70.4px;top:1457.9px;width:28.0px;height:27.6px;border:3px solid #0a3cff;border-radius:4.5px"></div>
<svg class="r" style="left:133.3px;top:1460.2px" width="31" height="24" viewBox="0 0 31 24"><path d="M2.25 3.5 H27.2 M2.25 12.5 H27.2 M2.25 21 H27.2" stroke="#0a3cff" stroke-width="4.5" stroke-linecap="round"/></svg>
<div class="t " style="left:208.0px;top:1456.6px;font-size:26px;font-weight:400;color:#222;letter-spacing:0.10px;">Vivid Seats</div>
<div class="t " style="left:395.4px;top:1454.6px;font-size:26px;font-weight:400;color:#222;letter-spacing:1.11px;">kdkd983g9g</div>
<div class="t " style="left:587.3px;top:1456.6px;font-size:26px;font-weight:400;color:#0a3cff;letter-spacing:0.10px;text-decoration:underline;text-decoration-thickness:2px;text-underline-offset:5px">Last Chance</div>
<div class="t " style="left:806.5px;top:1456.6px;font-size:26px;font-weight:400;color:#222;letter-spacing:0.80px;">Mobile</div>
<div class="t " style="left:989.6px;top:1456.6px;font-size:26px;font-weight:400;color:#222;letter-spacing:0.23px;">02/21/22 18:35</div>
<div class="t " style="left:1228.7px;top:1456.6px;font-size:26px;font-weight:400;color:#222;letter-spacing:0.15px;">Miami Marlins at Atlanta Braves...</div>
<div class="t " style="left:1657.0px;top:1456.6px;font-size:26px;font-weight:400;color:#222;letter-spacing:0.08px;">LoanDepot Park</div>
<div class="t " style="left:1967.6px;top:1456.6px;font-size:26px;font-weight:400;color:#222;letter-spacing:0.62px;">03/22/22 19:05</div>
<div class="t " style="left:2199.3px;top:1456.6px;font-size:26px;font-weight:400;color:#222;letter-spacing:2.00px;">02</div>
<div class="t " style="left:2310.0px;top:1456.6px;font-size:26px;font-weight:400;color:#222;">R6</div>
<div class="t " style="left:2439.6px;top:1456.6px;font-size:26px;font-weight:400;color:#222;">2</div>
<div class="t " style="left:2523.3px;top:1456.6px;font-size:26px;font-weight:400;color:#222;letter-spacing:-0.50px;">11-12</div>
<div class="t " style="left:2626.0px;top:1456.6px;font-size:26px;font-weight:400;color:#222;letter-spacing:0.17px;">$150.00</div>
<div class="r" style="left:70.4px;top:1532.0px;width:28.0px;height:27.6px;border:3px solid #0a3cff;border-radius:4.5px"></div>
<svg class="r" style="left:133.3px;top:1534.0px" width="31" height="24" viewBox="0 0 31 24"><path d="M2.25 3.5 H27.2 M2.25 12.5 H27.2 M2.25 21 H27.2" stroke="#0a3cff" stroke-width="4.5" stroke-linecap="round"/></svg>
<div class="t " style="left:208.0px;top:1530.4px;font-size:26px;font-weight:400;color:#222;letter-spacing:0.10px;">Vivid Seats</div>
<div class="t " style="left:395.4px;top:1528.4px;font-size:26px;font-weight:400;color:#222;letter-spacing:1.11px;">kdkd983g9g</div>
<div class="t " style="left:587.3px;top:1530.4px;font-size:26px;font-weight:400;color:#0a3cff;letter-spacing:0.10px;text-decoration:underline;text-decoration-thickness:2px;text-underline-offset:5px">Last Chance</div>
<div class="t " style="left:806.5px;top:1530.4px;font-size:26px;font-weight:400;color:#222;letter-spacing:0.80px;">Mobile</div>
<div class="t " style="left:989.6px;top:1530.4px;font-size:26px;font-weight:400;color:#222;letter-spacing:0.23px;">02/21/22 18:35</div>
<div class="t " style="left:1228.7px;top:1530.4px;font-size:26px;font-weight:400;color:#222;letter-spacing:0.15px;">Miami Marlins at Atlanta Braves...</div>
<div class="t " style="left:1657.0px;top:1530.4px;font-size:26px;font-weight:400;color:#222;letter-spacing:0.08px;">LoanDepot Park</div>
<div class="t " style="left:1967.6px;top:1530.4px;font-size:26px;font-weight:400;color:#222;letter-spacing:0.62px;">03/22/22 19:05</div>
<div class="t " style="left:2199.3px;top:1530.4px;font-size:26px;font-weight:400;color:#222;letter-spacing:2.00px;">02</div>
<div class="t " style="left:2310.0px;top:1530.4px;font-size:26px;font-weight:400;color:#222;">R6</div>
<div class="t " style="left:2439.6px;top:1530.4px;font-size:26px;font-weight:400;color:#222;">2</div>
<div class="t " style="left:2523.3px;top:1530.4px;font-size:26px;font-weight:400;color:#222;letter-spacing:-0.50px;">11-12</div>
<div class="t " style="left:2626.0px;top:1530.4px;font-size:26px;font-weight:400;color:#222;letter-spacing:0.17px;">$150.00</div>
<div class="r" style="left:70.4px;top:1605.7px;width:28.0px;height:27.6px;border:3px solid #0a3cff;border-radius:4.5px"></div>
<svg class="r" style="left:133.3px;top:1608.5px" width="31" height="24" viewBox="0 0 31 24"><path d="M2.25 3.5 H27.2 M2.25 12.5 H27.2 M2.25 21 H27.2" stroke="#0a3cff" stroke-width="4.5" stroke-linecap="round"/></svg>
<div class="t " style="left:208.0px;top:1604.7px;font-size:26px;font-weight:400;color:#222;letter-spacing:0.10px;">Vivid Seats</div>
<div class="t " style="left:395.4px;top:1602.7px;font-size:26px;font-weight:400;color:#222;letter-spacing:1.11px;">kdkd983g9g</div>
<div class="t " style="left:587.3px;top:1604.7px;font-size:26px;font-weight:400;color:#0a3cff;letter-spacing:0.10px;text-decoration:underline;text-decoration-thickness:2px;text-underline-offset:5px">Last Chance</div>
<div class="t " style="left:806.5px;top:1604.7px;font-size:26px;font-weight:400;color:#222;letter-spacing:0.80px;">Mobile</div>
<div class="t " style="left:989.6px;top:1604.7px;font-size:26px;font-weight:400;color:#222;letter-spacing:0.23px;">02/21/22 18:35</div>
<div class="t " style="left:1228.7px;top:1604.7px;font-size:26px;font-weight:400;color:#222;letter-spacing:0.15px;">Miami Marlins at Atlanta Braves...</div>
<div class="t " style="left:1657.0px;top:1604.7px;font-size:26px;font-weight:400;color:#222;letter-spacing:0.08px;">LoanDepot Park</div>
<div class="t " style="left:1967.6px;top:1604.7px;font-size:26px;font-weight:400;color:#222;letter-spacing:0.62px;">03/22/22 19:05</div>
<div class="t " style="left:2199.3px;top:1604.7px;font-size:26px;font-weight:400;color:#222;letter-spacing:2.00px;">02</div>
<div class="t " style="left:2310.0px;top:1604.7px;font-size:26px;font-weight:400;color:#222;">R6</div>
<div class="t " style="left:2439.6px;top:1604.7px;font-size:26px;font-weight:400;color:#222;">2</div>
<div class="t " style="left:2523.3px;top:1604.7px;font-size:26px;font-weight:400;color:#222;letter-spacing:-0.50px;">11-12</div>
<div class="t " style="left:2626.0px;top:1604.7px;font-size:26px;font-weight:400;color:#222;letter-spacing:0.17px;">$150.00</div>
<div class="r" style="left:70.4px;top:1679.8px;width:28.0px;height:27.6px;border:3px solid #0a3cff;border-radius:4.5px"></div>
<svg class="r" style="left:133.3px;top:1683.2px" width="31" height="24" viewBox="0 0 31 24"><path d="M2.25 3.5 H27.2 M2.25 12.5 H27.2 M2.25 21 H27.2" stroke="#0a3cff" stroke-width="4.5" stroke-linecap="round"/></svg>
<div class="t " style="left:208.0px;top:1681.2px;font-size:26px;font-weight:400;color:#222;letter-spacing:0.10px;">Vivid Seats</div>
<div class="t " style="left:395.4px;top:1679.2px;font-size:26px;font-weight:400;color:#222;letter-spacing:1.11px;">kdkd983g9g</div>
<div class="t " style="left:587.3px;top:1681.2px;font-size:26px;font-weight:400;color:#0a3cff;letter-spacing:0.10px;text-decoration:underline;text-decoration-thickness:2px;text-underline-offset:5px">Last Chance</div>
<div class="t " style="left:806.5px;top:1681.2px;font-size:26px;font-weight:400;color:#222;letter-spacing:0.80px;">Mobile</div>
<div class="t " style="left:989.6px;top:1681.2px;font-size:26px;font-weight:400;color:#222;letter-spacing:0.23px;">02/21/22 18:35</div>
<div class="t " style="left:1228.7px;top:1681.2px;font-size:26px;font-weight:400;color:#222;letter-spacing:0.15px;">Miami Marlins at Atlanta Braves...</div>
<div class="t " style="left:1657.0px;top:1681.2px;font-size:26px;font-weight:400;color:#222;letter-spacing:0.08px;">LoanDepot Park</div>
<div class="t " style="left:1967.6px;top:1681.2px;font-size:26px;font-weight:400;color:#222;letter-spacing:0.62px;">03/22/22 19:05</div>
<div class="t " style="left:2199.3px;top:1681.2px;font-size:26px;font-weight:400;color:#222;letter-spacing:2.00px;">02</div>
<div class="t " style="left:2310.0px;top:1681.2px;font-size:26px;font-weight:400;color:#222;">R6</div>
<div class="t " style="left:2439.6px;top:1681.2px;font-size:26px;font-weight:400;color:#222;">2</div>
<div class="t " style="left:2523.3px;top:1681.2px;font-size:26px;font-weight:400;color:#222;letter-spacing:-0.50px;">11-12</div>
<div class="t " style="left:2626.0px;top:1681.2px;font-size:26px;font-weight:400;color:#222;letter-spacing:0.17px;">$150.00</div>
<div class="r" style="left:70.4px;top:1756.0px;width:28.0px;height:27.6px;border:3px solid #0a3cff;border-radius:4.5px"></div>
<svg class="r" style="left:133.3px;top:1758.9px" width="31" height="24" viewBox="0 0 31 24"><path d="M2.25 3.5 H27.2 M2.25 12.5 H27.2 M2.25 21 H27.2" stroke="#0a3cff" stroke-width="4.5" stroke-linecap="round"/></svg>
<div class="t " style="left:208.0px;top:1755.1px;font-size:26px;font-weight:400;color:#222;letter-spacing:0.10px;">Vivid Seats</div>
<div class="t " style="left:395.4px;top:1753.1px;font-size:26px;font-weight:400;color:#222;letter-spacing:1.11px;">kdkd983g9g</div>
<div class="t " style="left:587.3px;top:1755.1px;font-size:26px;font-weight:400;color:#0a3cff;letter-spacing:0.10px;text-decoration:underline;text-decoration-thickness:2px;text-underline-offset:5px">Last Chance</div>
<div class="t " style="left:806.5px;top:1755.1px;font-size:26px;font-weight:400;color:#222;letter-spacing:0.80px;">Mobile</div>
<div class="t " style="left:989.6px;top:1755.1px;font-size:26px;font-weight:400;color:#222;letter-spacing:0.23px;">02/21/22 18:35</div>
<div class="t " style="left:1228.7px;top:1755.1px;font-size:26px;font-weight:400;color:#222;letter-spacing:0.15px;">Miami Marlins at Atlanta Braves...</div>
<div class="t " style="left:1657.0px;top:1755.1px;font-size:26px;font-weight:400;color:#222;letter-spacing:0.08px;">LoanDepot Park</div>
<div class="t " style="left:1967.6px;top:1755.1px;font-size:26px;font-weight:400;color:#222;letter-spacing:0.62px;">03/22/22 19:05</div>
<div class="t " style="left:2199.3px;top:1755.1px;font-size:26px;font-weight:400;color:#222;letter-spacing:2.00px;">02</div>
<div class="t " style="left:2310.0px;top:1755.1px;font-size:26px;font-weight:400;color:#222;">R6</div>
<div class="t " style="left:2439.6px;top:1755.1px;font-size:26px;font-weight:400;color:#222;">2</div>
<div class="t " style="left:2523.3px;top:1755.1px;font-size:26px;font-weight:400;color:#222;letter-spacing:-0.50px;">11-12</div>
<div class="t " style="left:2626.0px;top:1755.1px;font-size:26px;font-weight:400;color:#222;letter-spacing:0.17px;">$150.00</div>
<div class="r" style="left:70.4px;top:1829.5px;width:28.0px;height:27.6px;border:3px solid #0a3cff;border-radius:4.5px"></div>
<svg class="r" style="left:133.3px;top:1832.9px" width="31" height="24" viewBox="0 0 31 24"><path d="M2.25 3.5 H27.2 M2.25 12.5 H27.2 M2.25 21 H27.2" stroke="#0a3cff" stroke-width="4.5" stroke-linecap="round"/></svg>
<div class="t " style="left:208.0px;top:1829.1px;font-size:26px;font-weight:400;color:#222;letter-spacing:0.10px;">Vivid Seats</div>
<div class="t " style="left:395.4px;top:1827.1px;font-size:26px;font-weight:400;color:#222;letter-spacing:1.11px;">kdkd983g9g</div>
<div class="t " style="left:587.3px;top:1829.1px;font-size:26px;font-weight:400;color:#0a3cff;letter-spacing:0.10px;text-decoration:underline;text-decoration-thickness:2px;text-underline-offset:5px">Last Chance</div>
<div class="t " style="left:806.5px;top:1829.1px;font-size:26px;font-weight:400;color:#222;letter-spacing:0.80px;">Mobile</div>
<div class="t " style="left:989.6px;top:1829.1px;font-size:26px;font-weight:400;color:#222;letter-spacing:0.23px;">02/21/22 18:35</div>
<div class="t " style="left:1228.7px;top:1829.1px;font-size:26px;font-weight:400;color:#222;letter-spacing:0.15px;">Miami Marlins at Atlanta Braves...</div>
<div class="t " style="left:1657.0px;top:1829.1px;font-size:26px;font-weight:400;color:#222;letter-spacing:0.08px;">LoanDepot Park</div>
<div class="t " style="left:1967.6px;top:1829.1px;font-size:26px;font-weight:400;color:#222;letter-spacing:0.62px;">03/22/22 19:05</div>
<div class="t " style="left:2199.3px;top:1829.1px;font-size:26px;font-weight:400;color:#222;letter-spacing:2.00px;">02</div>
<div class="t " style="left:2310.0px;top:1829.1px;font-size:26px;font-weight:400;color:#222;">R6</div>
<div class="t " style="left:2439.6px;top:1829.1px;font-size:26px;font-weight:400;color:#222;">2</div>
<div class="t " style="left:2523.3px;top:1829.1px;font-size:26px;font-weight:400;color:#222;letter-spacing:-0.50px;">11-12</div>
<div class="t " style="left:2626.0px;top:1829.1px;font-size:26px;font-weight:400;color:#222;letter-spacing:0.17px;">$150.00</div>
<div class="r" style="left:70.4px;top:1903.8px;width:28.0px;height:27.6px;border:3px solid #0a3cff;border-radius:4.5px"></div>
<svg class="r" style="left:133.3px;top:1902.7px" width="31" height="24" viewBox="0 0 31 24"><path d="M2.25 3.5 H27.2 M2.25 12.5 H27.2 M2.25 21 H27.2" stroke="#0a3cff" stroke-width="4.5" stroke-linecap="round"/></svg>
<div class="t " style="left:208.0px;top:1902.6px;font-size:26px;font-weight:400;color:#222;letter-spacing:0.10px;">Vivid Seats</div>
<div class="t " style="left:395.4px;top:1900.6px;font-size:26px;font-weight:400;color:#222;letter-spacing:1.11px;">kdkd983g9g</div>
<div class="t " style="left:587.3px;top:1902.6px;font-size:26px;font-weight:400;color:#0a3cff;letter-spacing:0.10px;text-decoration:underline;text-decoration-thickness:2px;text-underline-offset:5px">Last Chance</div>
<div class="t " style="left:806.5px;top:1902.6px;font-size:26px;font-weight:400;color:#222;letter-spacing:0.80px;">Mobile</div>
<div class="t " style="left:989.6px;top:1902.6px;font-size:26px;font-weight:400;color:#222;letter-spacing:0.23px;">02/21/22 18:35</div>
<div class="t " style="left:1228.7px;top:1902.6px;font-size:26px;font-weight:400;color:#222;letter-spacing:0.15px;">Miami Marlins at Atlanta Braves...</div>
<div class="t " style="left:1657.0px;top:1902.6px;font-size:26px;font-weight:400;color:#222;letter-spacing:0.08px;">LoanDepot Park</div>
<div class="t " style="left:1967.6px;top:1902.6px;font-size:26px;font-weight:400;color:#222;letter-spacing:0.62px;">03/22/22 19:05</div>
<div class="t " style="left:2199.3px;top:1902.6px;font-size:26px;font-weight:400;color:#222;letter-spacing:2.00px;">02</div>
<div class="t " style="left:2310.0px;top:1902.6px;font-size:26px;font-weight:400;color:#222;">R6</div>
<div class="t " style="left:2439.6px;top:1902.6px;font-size:26px;font-weight:400;color:#222;">2</div>
<div class="t " style="left:2523.3px;top:1902.6px;font-size:26px;font-weight:400;color:#222;letter-spacing:-0.50px;">11-12</div>
<div class="t " style="left:2626.0px;top:1902.6px;font-size:26px;font-weight:400;color:#222;letter-spacing:0.17px;">$150.00</div>
<div class="r" style="left:70.4px;top:1977.9px;width:28.0px;height:27.6px;border:3px solid #0a3cff;border-radius:4.5px"></div>
<svg class="r" style="left:133.3px;top:1976.6px" width="31" height="24" viewBox="0 0 31 24"><path d="M2.25 3.5 H27.2 M2.25 12.5 H27.2 M2.25 21 H27.2" stroke="#0a3cff" stroke-width="4.5" stroke-linecap="round"/></svg>
<div class="t " style="left:208.0px;top:1976.6px;font-size:26px;font-weight:400;color:#222;letter-spacing:0.10px;">Vivid Seats</div>
<div class="t " style="left:395.4px;top:1974.6px;font-size:26px;font-weight:400;color:#222;letter-spacing:1.11px;">kdkd983g9g</div>
<div class="t " style="left:587.3px;top:1976.6px;font-size:26px;font-weight:400;color:#0a3cff;letter-spacing:0.10px;text-decoration:underline;text-decoration-thickness:2px;text-underline-offset:5px">Last Chance</div>
<div class="t " style="left:806.5px;top:1976.6px;font-size:26px;font-weight:400;color:#222;letter-spacing:0.80px;">Mobile</div>
<div class="t " style="left:989.6px;top:1976.6px;font-size:26px;font-weight:400;color:#222;letter-spacing:0.23px;">02/21/22 18:35</div>
<div class="t " style="left:1228.7px;top:1976.6px;font-size:26px;font-weight:400;color:#222;letter-spacing:0.15px;">Miami Marlins at Atlanta Braves...</div>
<div class="t " style="left:1657.0px;top:1976.6px;font-size:26px;font-weight:400;color:#222;letter-spacing:0.08px;">LoanDepot Park</div>
<div class="t " style="left:1967.6px;top:1976.6px;font-size:26px;font-weight:400;color:#222;letter-spacing:0.62px;">03/22/22 19:05</div>
<div class="t " style="left:2199.3px;top:1976.6px;font-size:26px;font-weight:400;color:#222;letter-spacing:2.00px;">02</div>
<div class="t " style="left:2310.0px;top:1976.6px;font-size:26px;font-weight:400;color:#222;">R6</div>
<div class="t " style="left:2439.6px;top:1976.6px;font-size:26px;font-weight:400;color:#222;">2</div>
<div class="t " style="left:2523.3px;top:1976.6px;font-size:26px;font-weight:400;color:#222;letter-spacing:-0.50px;">11-12</div>
<div class="t " style="left:2626.0px;top:1976.6px;font-size:26px;font-weight:400;color:#222;letter-spacing:0.17px;">$150.00</div>
<div class="r" style="left:70.4px;top:2051.9px;width:28.0px;height:27.6px;border:3px solid #0a3cff;border-radius:4.5px"></div>
<svg class="r" style="left:133.3px;top:2050.5px" width="31" height="24" viewBox="0 0 31 24"><path d="M2.25 3.5 H27.2 M2.25 12.5 H27.2 M2.25 21 H27.2" stroke="#0a3cff" stroke-width="4.5" stroke-linecap="round"/></svg>
<div class="t " style="left:208.0px;top:2050.4px;font-size:26px;font-weight:400;color:#222;letter-spacing:0.10px;">Vivid Seats</div>
<div class="t " style="left:395.4px;top:2048.4px;font-size:26px;font-weight:400;color:#222;letter-spacing:1.11px;">kdkd983g9g</div>
<div class="t " style="left:587.3px;top:2050.4px;font-size:26px;font-weight:400;color:#0a3cff;letter-spacing:0.10px;text-decoration:underline;text-decoration-thickness:2px;text-underline-offset:5px">Last Chance</div>
<div class="t " style="left:806.5px;top:2050.4px;font-size:26px;font-weight:400;color:#222;letter-spacing:0.80px;">Mobile</div>
<div class="t " style="left:989.6px;top:2050.4px;font-size:26px;font-weight:400;color:#222;letter-spacing:0.23px;">02/21/22 18:35</div>
<div class="t " style="left:1228.7px;top:2050.4px;font-size:26px;font-weight:400;color:#222;letter-spacing:0.15px;">Miami Marlins at Atlanta Braves...</div>
<div class="t " style="left:1657.0px;top:2050.4px;font-size:26px;font-weight:400;color:#222;letter-spacing:0.08px;">LoanDepot Park</div>
<div class="t " style="left:1967.6px;top:2050.4px;font-size:26px;font-weight:400;color:#222;letter-spacing:0.62px;">03/22/22 19:05</div>
<div class="t " style="left:2199.3px;top:2050.4px;font-size:26px;font-weight:400;color:#222;letter-spacing:2.00px;">02</div>
<div class="t " style="left:2310.0px;top:2050.4px;font-size:26px;font-weight:400;color:#222;">R6</div>
<div class="t " style="left:2439.6px;top:2050.4px;font-size:26px;font-weight:400;color:#222;">2</div>
<div class="t " style="left:2523.3px;top:2050.4px;font-size:26px;font-weight:400;color:#222;letter-spacing:-0.50px;">11-12</div>
<div class="t " style="left:2626.0px;top:2050.4px;font-size:26px;font-weight:400;color:#222;letter-spacing:0.17px;">$150.00</div>
<div class="r" style="left:70.4px;top:2125.0px;width:28.0px;height:27.6px;border:3px solid #0a3cff;border-radius:4.5px"></div>
<svg class="r" style="left:133.3px;top:2126.6px" width="31" height="24" viewBox="0 0 31 24"><path d="M2.25 3.5 H27.2 M2.25 12.5 H27.2 M2.25 21 H27.2" stroke="#0a3cff" stroke-width="4.5" stroke-linecap="round"/></svg>
<div class="t " style="left:208.0px;top:2123.8px;font-size:26px;font-weight:400;color:#222;letter-spacing:0.10px;">Vivid Seats</div>
<div class="t " style="left:395.4px;top:2121.8px;font-size:26px;font-weight:400;color:#222;letter-spacing:1.11px;">kdkd983g9g</div>
<div class="t " style="left:587.3px;top:2123.8px;font-size:26px;font-weight:400;color:#0a3cff;letter-spacing:0.10px;text-decoration:underline;text-decoration-thickness:2px;text-underline-offset:5px">Last Chance</div>
<div class="t " style="left:806.5px;top:2123.8px;font-size:26px;font-weight:400;color:#222;letter-spacing:0.80px;">Mobile</div>
<div class="t " style="left:989.6px;top:2123.8px;font-size:26px;font-weight:400;color:#222;letter-spacing:0.23px;">02/21/22 18:35</div>
<div class="t " style="left:1228.7px;top:2123.8px;font-size:26px;font-weight:400;color:#222;letter-spacing:0.15px;">Miami Marlins at Atlanta Braves...</div>
<div class="t " style="left:1657.0px;top:2123.8px;font-size:26px;font-weight:400;color:#222;letter-spacing:0.08px;">LoanDepot Park</div>
<div class="t " style="left:1967.6px;top:2123.8px;font-size:26px;font-weight:400;color:#222;letter-spacing:0.62px;">03/22/22 19:05</div>
<div class="t " style="left:2199.3px;top:2123.8px;font-size:26px;font-weight:400;color:#222;letter-spacing:2.00px;">02</div>
<div class="t " style="left:2310.0px;top:2123.8px;font-size:26px;font-weight:400;color:#222;">R6</div>
<div class="t " style="left:2439.6px;top:2123.8px;font-size:26px;font-weight:400;color:#222;">2</div>
<div class="t " style="left:2523.3px;top:2123.8px;font-size:26px;font-weight:400;color:#222;letter-spacing:-0.50px;">11-12</div>
<div class="t " style="left:2626.0px;top:2123.8px;font-size:26px;font-weight:400;color:#222;letter-spacing:0.17px;">$150.00</div>
<div class="r" style="left:70.4px;top:2198.1px;width:28.0px;height:27.6px;border:3px solid #0a3cff;border-radius:4.5px"></div>
<svg class="r" style="left:133.3px;top:2199.0px" width="31" height="24" viewBox="0 0 31 24"><path d="M2.25 3.5 H27.2 M2.25 12.5 H27.2 M2.25 21 H27.2" stroke="#0a3cff" stroke-width="4.5" stroke-linecap="round"/></svg>
<div class="t " style="left:208.0px;top:2197.2px;font-size:26px;font-weight:400;color:#222;letter-spacing:0.10px;">Vivid Seats</div>
<div class="t " style="left:395.4px;top:2195.2px;font-size:26px;font-weight:400;color:#222;letter-spacing:1.11px;">kdkd983g9g</div>
<div class="t " style="left:587.3px;top:2197.2px;font-size:26px;font-weight:400;color:#0a3cff;letter-spacing:0.10px;text-decoration:underline;text-decoration-thickness:2px;text-underline-offset:5px">Last Chance</div>
<div class="t " style="left:806.5px;top:2197.2px;font-size:26px;font-weight:400;color:#222;letter-spacing:0.80px;">Mobile</div>
<div class="t " style="left:989.6px;top:2197.2px;font-size:26px;font-weight:400;color:#222;letter-spacing:0.23px;">02/21/22 18:35</div>
<div class="t " style="left:1228.7px;top:2197.2px;font-size:26px;font-weight:400;color:#222;letter-spacing:0.15px;">Miami Marlins at Atlanta Braves...</div>
<div class="t " style="left:1657.0px;top:2197.2px;font-size:26px;font-weight:400;color:#222;letter-spacing:0.08px;">LoanDepot Park</div>
<div class="t " style="left:1967.6px;top:2197.2px;font-size:26px;font-weight:400;color:#222;letter-spacing:0.62px;">03/22/22 19:05</div>
<div class="t " style="left:2199.3px;top:2197.2px;font-size:26px;font-weight:400;color:#222;letter-spacing:2.00px;">02</div>
<div class="t " style="left:2310.0px;top:2197.2px;font-size:26px;font-weight:400;color:#222;">R6</div>
<div class="t " style="left:2439.6px;top:2197.2px;font-size:26px;font-weight:400;color:#222;">2</div>
<div class="t " style="left:2523.3px;top:2197.2px;font-size:26px;font-weight:400;color:#222;letter-spacing:-0.50px;">11-12</div>
<div class="t " style="left:2626.0px;top:2197.2px;font-size:26px;font-weight:400;color:#222;letter-spacing:0.17px;">$150.00</div>
<div class="r" style="left:167.5px;top:877.0px;width:323.0px;height:234.0px;background:#fff;border-radius:10px;box-shadow:0 22px 45px rgba(0,0,0,0.20);z-index:5"></div>
<div class="t " style="left:194.3px;top:901.3px;font-size:27px;font-weight:400;color:#222;letter-spacing:0.86px;z-index:6">Importer</div>
<div class="t " style="left:195.3px;top:955.6px;font-size:27px;font-weight:400;color:#222;letter-spacing:0.25px;z-index:6">Copy Order Number</div>
<div class="t " style="left:195.3px;top:1008.6px;font-size:27px;font-weight:400;color:#222;letter-spacing:0.33px;z-index:6">Copy All Tags</div>
<div class="t " style="left:196.3px;top:1062.6px;font-size:27px;font-weight:400;color:#222;letter-spacing:0.36px;z-index:6">Assign Accounts</div>
<svg class="r" style="left:135px;top:885px;z-index:7" width="60" height="60" viewBox="0 0 60 60"><path d="M19.75 10.9 C17.2 10.9 16.3 13 16.7 16 L20.1 30.6 C18 28 15 25.2 12.7 25.4 C10 25.6 9 28 10.2 30.6 C12 33 15 37 17.4 39.5 C19 42 21 43 22.1 43.9 L22.4 46.9 L30.5 46.9 C32 46 33 43.6 33.8 43.6 C34.6 43.6 35.5 46.9 37.2 46.9 L40.2 46.9 L40.2 42.2 C42 40 44.9 37 44.9 34.8 L45.3 25.4 C45.3 23.5 44.5 22.5 43.2 22.8 C41.5 23 40.5 23.5 40.2 25.4 C40 22 38.5 20.5 36.8 20.8 C34.5 21 33 22.5 32.5 25.4 C32.3 22 30.8 20.1 29.1 20.1 C27 20.1 25.4 21 25.4 23.5 L25.4 25.4 C25 20 24 15 23.1 13.4 C22.5 11.5 21 10.9 19.75 10.9 Z" fill="#fff" stroke="#000" stroke-width="1.8" stroke-linejoin="round"/><path d="M27.6 31.5 V40.5 M32.5 31.5 V40.5 M37.5 31.5 V40.5" stroke="#000" stroke-width="1.7"/></svg>
</body></html>
